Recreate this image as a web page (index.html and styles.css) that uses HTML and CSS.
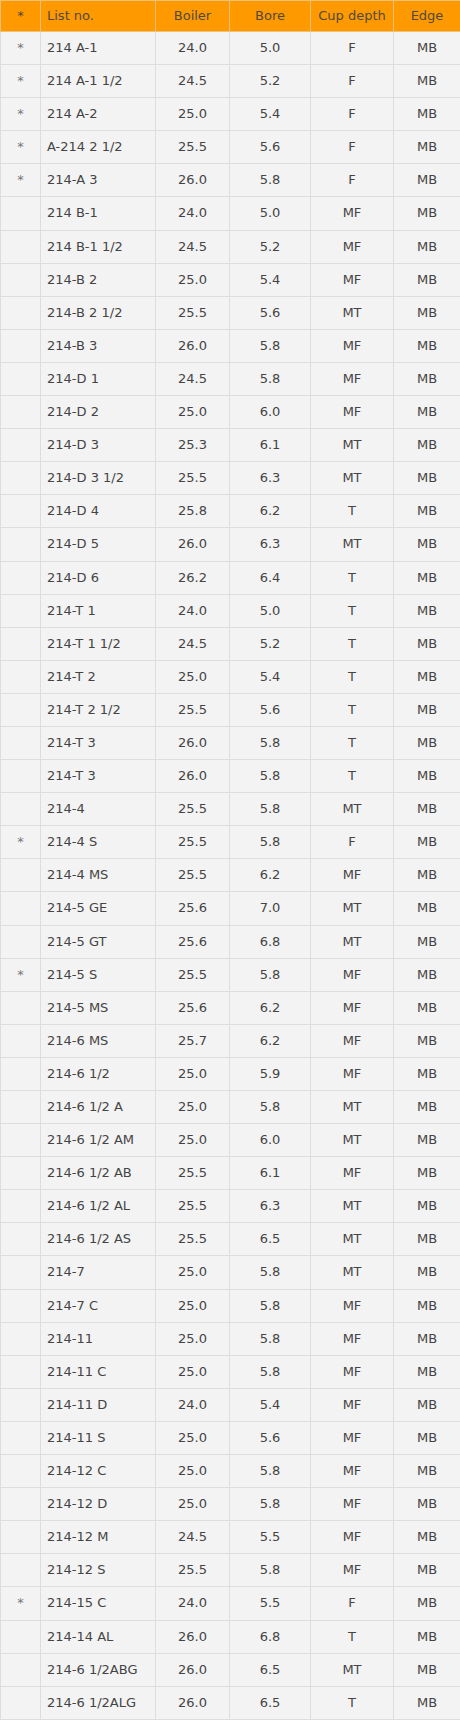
FILE: index.html
```html
<!DOCTYPE html>
<html>
<head>
<meta charset="utf-8">
<link rel="stylesheet" href="styles.css">
</head>
<body>
<table class="specs">
<colgroup>
<col class="c-star"><col class="c-list"><col class="c-boiler"><col class="c-bore"><col class="c-cup"><col class="c-edge">
</colgroup>
<thead>
<tr><th>*</th><th>List no.</th><th>Boiler</th><th>Bore</th><th>Cup depth</th><th>Edge</th></tr>
</thead>
<tbody>
<tr><td>*</td><td>214 A-1</td><td>24.0</td><td>5.0</td><td>F</td><td>MB</td></tr>
<tr><td>*</td><td>214 A-1 1/2</td><td>24.5</td><td>5.2</td><td>F</td><td>MB</td></tr>
<tr><td>*</td><td>214 A-2</td><td>25.0</td><td>5.4</td><td>F</td><td>MB</td></tr>
<tr><td>*</td><td>A-214 2 1/2</td><td>25.5</td><td>5.6</td><td>F</td><td>MB</td></tr>
<tr><td>*</td><td>214-A 3</td><td>26.0</td><td>5.8</td><td>F</td><td>MB</td></tr>
<tr><td></td><td>214 B-1</td><td>24.0</td><td>5.0</td><td>MF</td><td>MB</td></tr>
<tr><td></td><td>214 B-1 1/2</td><td>24.5</td><td>5.2</td><td>MF</td><td>MB</td></tr>
<tr><td></td><td>214-B 2</td><td>25.0</td><td>5.4</td><td>MF</td><td>MB</td></tr>
<tr><td></td><td>214-B 2 1/2</td><td>25.5</td><td>5.6</td><td>MT</td><td>MB</td></tr>
<tr><td></td><td>214-B 3</td><td>26.0</td><td>5.8</td><td>MF</td><td>MB</td></tr>
<tr><td></td><td>214-D 1</td><td>24.5</td><td>5.8</td><td>MF</td><td>MB</td></tr>
<tr><td></td><td>214-D 2</td><td>25.0</td><td>6.0</td><td>MF</td><td>MB</td></tr>
<tr><td></td><td>214-D 3</td><td>25.3</td><td>6.1</td><td>MT</td><td>MB</td></tr>
<tr><td></td><td>214-D 3 1/2</td><td>25.5</td><td>6.3</td><td>MT</td><td>MB</td></tr>
<tr><td></td><td>214-D 4</td><td>25.8</td><td>6.2</td><td>T</td><td>MB</td></tr>
<tr><td></td><td>214-D 5</td><td>26.0</td><td>6.3</td><td>MT</td><td>MB</td></tr>
<tr><td></td><td>214-D 6</td><td>26.2</td><td>6.4</td><td>T</td><td>MB</td></tr>
<tr><td></td><td>214-T 1</td><td>24.0</td><td>5.0</td><td>T</td><td>MB</td></tr>
<tr><td></td><td>214-T 1 1/2</td><td>24.5</td><td>5.2</td><td>T</td><td>MB</td></tr>
<tr><td></td><td>214-T 2</td><td>25.0</td><td>5.4</td><td>T</td><td>MB</td></tr>
<tr><td></td><td>214-T 2 1/2</td><td>25.5</td><td>5.6</td><td>T</td><td>MB</td></tr>
<tr><td></td><td>214-T 3</td><td>26.0</td><td>5.8</td><td>T</td><td>MB</td></tr>
<tr><td></td><td>214-T 3</td><td>26.0</td><td>5.8</td><td>T</td><td>MB</td></tr>
<tr><td></td><td>214-4</td><td>25.5</td><td>5.8</td><td>MT</td><td>MB</td></tr>
<tr><td>*</td><td>214-4 S</td><td>25.5</td><td>5.8</td><td>F</td><td>MB</td></tr>
<tr><td></td><td>214-4 MS</td><td>25.5</td><td>6.2</td><td>MF</td><td>MB</td></tr>
<tr><td></td><td>214-5 GE</td><td>25.6</td><td>7.0</td><td>MT</td><td>MB</td></tr>
<tr><td></td><td>214-5 GT</td><td>25.6</td><td>6.8</td><td>MT</td><td>MB</td></tr>
<tr><td>*</td><td>214-5 S</td><td>25.5</td><td>5.8</td><td>MF</td><td>MB</td></tr>
<tr><td></td><td>214-5 MS</td><td>25.6</td><td>6.2</td><td>MF</td><td>MB</td></tr>
<tr><td></td><td>214-6 MS</td><td>25.7</td><td>6.2</td><td>MF</td><td>MB</td></tr>
<tr><td></td><td>214-6 1/2</td><td>25.0</td><td>5.9</td><td>MF</td><td>MB</td></tr>
<tr><td></td><td>214-6 1/2 A</td><td>25.0</td><td>5.8</td><td>MT</td><td>MB</td></tr>
<tr><td></td><td>214-6 1/2 AM</td><td>25.0</td><td>6.0</td><td>MT</td><td>MB</td></tr>
<tr><td></td><td>214-6 1/2 AB</td><td>25.5</td><td>6.1</td><td>MF</td><td>MB</td></tr>
<tr><td></td><td>214-6 1/2 AL</td><td>25.5</td><td>6.3</td><td>MT</td><td>MB</td></tr>
<tr><td></td><td>214-6 1/2 AS</td><td>25.5</td><td>6.5</td><td>MT</td><td>MB</td></tr>
<tr><td></td><td>214-7</td><td>25.0</td><td>5.8</td><td>MT</td><td>MB</td></tr>
<tr><td></td><td>214-7 C</td><td>25.0</td><td>5.8</td><td>MF</td><td>MB</td></tr>
<tr><td></td><td>214-11</td><td>25.0</td><td>5.8</td><td>MF</td><td>MB</td></tr>
<tr><td></td><td>214-11 C</td><td>25.0</td><td>5.8</td><td>MF</td><td>MB</td></tr>
<tr><td></td><td>214-11 D</td><td>24.0</td><td>5.4</td><td>MF</td><td>MB</td></tr>
<tr><td></td><td>214-11 S</td><td>25.0</td><td>5.6</td><td>MF</td><td>MB</td></tr>
<tr><td></td><td>214-12 C</td><td>25.0</td><td>5.8</td><td>MF</td><td>MB</td></tr>
<tr><td></td><td>214-12 D</td><td>25.0</td><td>5.8</td><td>MF</td><td>MB</td></tr>
<tr><td></td><td>214-12 M</td><td>24.5</td><td>5.5</td><td>MF</td><td>MB</td></tr>
<tr><td></td><td>214-12 S</td><td>25.5</td><td>5.8</td><td>MF</td><td>MB</td></tr>
<tr><td>*</td><td>214-15 C</td><td>24.0</td><td>5.5</td><td>F</td><td>MB</td></tr>
<tr><td></td><td>214-14 AL</td><td>26.0</td><td>6.8</td><td>T</td><td>MB</td></tr>
<tr><td></td><td>214-6 1/2ABG</td><td>26.0</td><td>6.5</td><td>MT</td><td>MB</td></tr>
<tr><td></td><td>214-6 1/2ALG</td><td>26.0</td><td>6.5</td><td>T</td><td>MB</td></tr>
</tbody>
</table>
</body>
</html>
```
FILE: styles.css
```css
html, body {
  margin: 0;
  padding: 0;
  background: #ffffff;
}
.specs {
  border-collapse: collapse;
  table-layout: fixed;
  width: 460px;
  font-family: "DejaVu Sans", Verdana, sans-serif;
  font-size: 13px;
  color: #444444;
  border: 1px solid #e2e2e2;
}
.specs th,
.specs td {
  box-sizing: border-box;
  border: 1px solid #dddddd;
  text-align: center;
  white-space: nowrap;
  overflow: hidden;
}
.specs th {
  background: #ff9900;
  color: #4f4a3e;
  font-weight: normal;
  line-height: 16px;
  padding: 7px 0;
  border-color: #f0c078;
}
.specs td {
  background: #f3f3f3;
  line-height: 16.1px;
  padding: 8px 0;
}
.specs th:nth-child(2),
.specs td:nth-child(2) {
  text-align: left;
  padding-left: 6px;
}
.specs td:first-child {
  color: #777777;
}
.c-star { width: 40px; }
.c-list { width: 115px; }
.c-boiler { width: 74px; }
.c-bore { width: 81px; }
.c-cup { width: 83px; }
.c-edge { width: 67px; }
```
